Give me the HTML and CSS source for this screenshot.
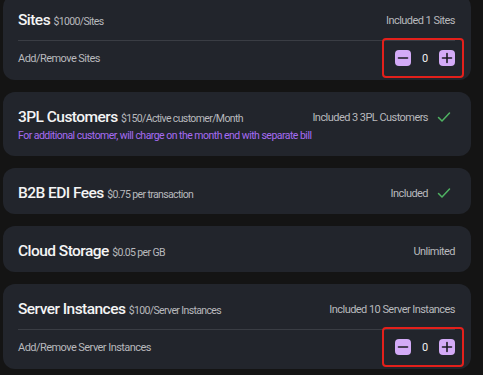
FILE: index.html
```html
<!DOCTYPE html>
<html lang="en">
<head>
  <meta charset="UTF-8">
  <title>Plan add-ons</title>
  <meta name="viewport" content="width=device-width, initial-scale=1">
  <link rel="stylesheet" href="styles.css">
</head>
<body>
  <div class="addon-list">
    <!-- Sites -->
    <div class="addon-card">
      <div class="addon-head">
        <span class="addon-title">Sites <span class="addon-price">$1000/Sites</span></span>
        <span class="addon-included">Included 1 Sites</span>
      </div>
      <div class="addon-row">
        <span class="addon-label">Add/Remove Sites</span>
        <div class="stepper">
          <button class="step-btn" aria-label="remove">
            <svg viewBox="0 0 16 16" width="16" height="16"><path d="M3.5 8h9" stroke="#1b1b22" stroke-width="1.6" stroke-linecap="round"/></svg>
          </button>
          <span class="step-value">0</span>
          <button class="step-btn" aria-label="add">
            <svg viewBox="0 0 16 16" width="16" height="16"><path d="M3.5 8h9M8 3.5v9" stroke="#1b1b22" stroke-width="1.6" stroke-linecap="round"/></svg>
          </button>
        </div>
      </div>
    </div>

    <!-- 3PL Customers -->
    <div class="addon-card">
      <div class="addon-head">
        <span class="addon-title">3PL Customers <span class="addon-price">$150/Active customer/Month</span></span>
        <span class="addon-included">Included 3 3PL Customers
          <svg class="check" viewBox="0 0 14 12" width="14" height="12"><path d="M1.5 6.5l3.5 3.5 7.5-8" fill="none" stroke="#4fb262" stroke-width="1.5" stroke-linecap="round" stroke-linejoin="round"/></svg>
        </span>
      </div>
      <div class="addon-note">For additional customer, will charge on the month end with separate bill</div>
    </div>

    <!-- B2B EDI -->
    <div class="addon-card">
      <div class="addon-head">
        <span class="addon-title">B2B EDI Fees <span class="addon-price">$0.75 per transaction</span></span>
        <span class="addon-included">Included
          <svg class="check" viewBox="0 0 14 12" width="14" height="12"><path d="M1.5 6.5l3.5 3.5 7.5-8" fill="none" stroke="#4fb262" stroke-width="1.5" stroke-linecap="round" stroke-linejoin="round"/></svg>
        </span>
      </div>
    </div>

    <!-- Cloud Storage -->
    <div class="addon-card">
      <div class="addon-head">
        <span class="addon-title">Cloud Storage <span class="addon-price">$0.05 per GB</span></span>
        <span class="addon-included">Unlimited</span>
      </div>
    </div>

    <!-- Server Instances -->
    <div class="addon-card">
      <div class="addon-head">
        <span class="addon-title">Server Instances <span class="addon-price">$100/Server Instances</span></span>
        <span class="addon-included">Included 10 Server Instances</span>
      </div>
      <div class="addon-row">
        <span class="addon-label">Add/Remove Server Instances</span>
        <div class="stepper">
          <button class="step-btn" aria-label="remove">
            <svg viewBox="0 0 16 16" width="16" height="16"><path d="M3.5 8h9" stroke="#1b1b22" stroke-width="1.6" stroke-linecap="round"/></svg>
          </button>
          <span class="step-value">0</span>
          <button class="step-btn" aria-label="add">
            <svg viewBox="0 0 16 16" width="16" height="16"><path d="M3.5 8h9M8 3.5v9" stroke="#1b1b22" stroke-width="1.6" stroke-linecap="round"/></svg>
          </button>
        </div>
      </div>
    </div>
  </div>
</body>
</html>
```

FILE: styles.css
```css
body {
  background: #141414;
  font-family: Roboto, 'Noto Sans', Arial, sans-serif;
  color: #f2f2f2;
  margin: 0;
  padding: 0;
  overflow: hidden;
}
.addon-list {
  display: flex;
  flex-direction: column;
  gap: 12px;
  margin: -5px 12px 0 3px;
}
.addon-card {
  background: #22252c;
  border-radius: 12px;
  padding: 15px 16px 11px 15px;
}
.addon-head {
  display: flex;
  align-items: center;
  justify-content: space-between;
  height: 20px;
}
.addon-title {
  font-size: 15.5px;
  font-weight: 500;
  color: #f4f4f4;
  letter-spacing: -0.035em;
  white-space: nowrap;
}
.addon-price {
  font-size: 10.5px;
  font-weight: 400;
  color: #b8b9bd;
  letter-spacing: -0.06em;
}
.addon-included {
  display: flex;
  align-items: center;
  gap: 9px;
  font-size: 11px;
  color: #b8b9bd;
  letter-spacing: -0.05em;
  white-space: nowrap;
}
.check { margin-right: 4px; }
.addon-note {
  margin-top: 2px;
  margin-bottom: 2px;
  font-size: 10.5px;
  line-height: 14px;
  color: #a66cf2;
  letter-spacing: -0.05em;
}
.addon-row {
  display: flex;
  align-items: center;
  justify-content: space-between;
  border-top: 1px solid #3a3d44;
  margin-top: 10px;
  padding-top: 9px;
  padding-bottom: 3px;
  height: 16px;
}
.addon-label {
  font-size: 11px;
  color: #b8b9bd;
  letter-spacing: -0.05em;
}
.stepper {
  display: flex;
  align-items: center;
  outline: 2px solid #e3201b;
  padding: 10px 7px 10px 11px;
  margin-right: -7px;
  border-radius: 2px;
}
.step-btn {
  width: 16px;
  height: 16px;
  padding: 0;
  border: none;
  border-radius: 4px;
  background: #d3aaf7;
  display: flex;
  align-items: center;
  justify-content: center;
  cursor: pointer;
}
.step-value {
  width: 28px;
  text-align: center;
  font-size: 11px;
  color: #f2f2f2;
}
```
